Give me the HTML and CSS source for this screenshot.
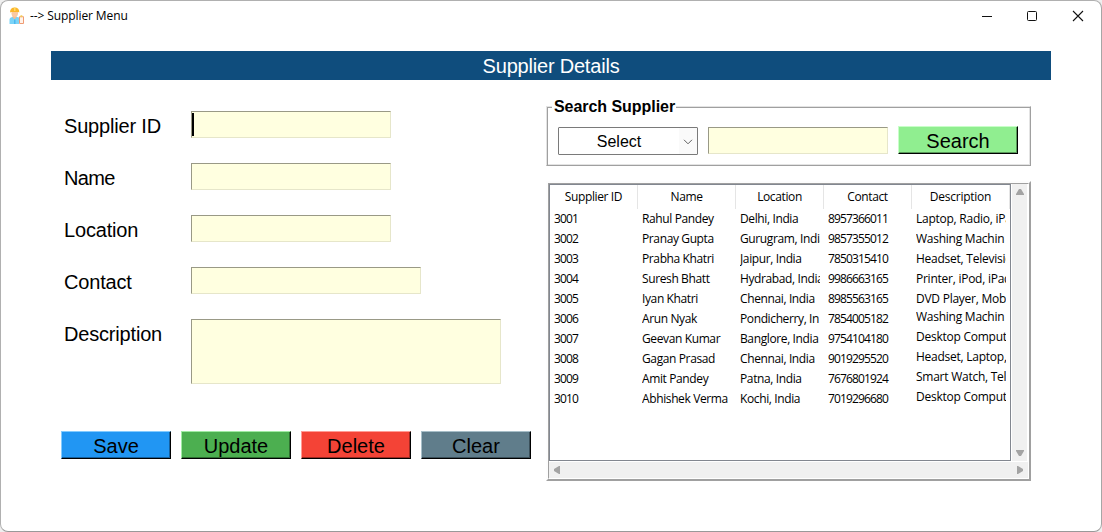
FILE: index.html
```html
<!DOCTYPE html>
<html lang="en">
<head>
<meta charset="utf-8">
<title>Supplier Menu</title>
<link rel="stylesheet" href="styles.css">
</head>
<body>
<div class="window">
  <header class="titlebar">
    <svg class="app-icon" width="16" height="18" viewBox="0 0 16 18">
      <path d="M0.5 17v-4.500q0-2 2-2.200l2-.5h3l2.500.7v6.500z" fill="#7bd3f7"/>
      <path d="M3.500 10l2 2.500 2-2.500v-2h-4z" fill="#f9b98f"/>
      <path d="M5 12.500h1.500v4.500h-1.500z" fill="#4cb8ee"/>
      <path d="M2.500 4.500h6.500v2.500q-.5 3-3.200 3t-3.300-3z" fill="#fbc9a2"/>
      <path d="M1 5.500q0-5 4.700-5t4.600 5l-1.300-.6h-6.600z" fill="#fbb72c"/>
      <path d="M5 .5h1.500v3.500h-1.500z" fill="#ffd968"/>
      <path d="M10.500 9.700h4v6.800h-4z" fill="#fff3ea" stroke="#ef9c75"/>
      <path d="M11.500 8.300h1.800v2h-1.800z" fill="#f5cb57"/>
    </svg>
    <span class="caption">--&gt; Supplier Menu</span>
    <svg class="controls" width="106" height="12" viewBox="0 0 106 12" fill="none" stroke="#111">
      <path d="M0 6.500h10"/>
      <rect x="45.500" y="1.500" width="9" height="9" rx="1"/>
      <path d="M91 1l10 10M101 1l-10 10" stroke-width="1.100"/>
    </svg>
  </header>
  <h1 class="banner">Supplier Details</h1>
  <main class="content">
    <section class="form">
      <div class="field"><label>Supplier ID</label><div class="entry focused"></div></div>
      <div class="field"><label class="tight">Name</label><div class="entry"></div></div>
      <div class="field"><label>Location</label><div class="entry"></div></div>
      <div class="field"><label>Contact</label><div class="entry wide"></div></div>
      <div class="field"><label>Description</label><div class="entry area"></div></div>
      <div class="actions">
        <button class="btn save">Save</button>
        <button class="btn update">Update</button>
        <button class="btn delete">Delete</button>
        <button class="btn clear">Clear</button>
      </div>
    </section>
    <section class="side">
      <div class="search">
        <span class="legend">Search Supplier</span>
        <div class="combo"><span class="value">Select</span><span class="drop"><svg width="10" height="6" viewBox="0 0 10 6" fill="none" stroke="#606060"><path d="M1 .8l4 4 4-4"/></svg></span></div>
        <div class="entry query"></div>
        <button class="btn find">Search</button>
      </div>
      <div class="panel">
        <div class="panel-inner">
          <div class="tree">
            <div class="row head"><span>Supplier ID</span><span>Name</span><span>Location</span><span>Contact</span><span>Description</span></div>
            <div class="row"><span class="num">3001</span><span>Rahul Pandey</span><span>Delhi, India</span><span class="num">8957366011</span><span>Laptop, Radio, iPad</span></div>
            <div class="row"><span class="num">3002</span><span>Pranay Gupta</span><span>Gurugram, India</span><span class="num">9857355012</span><span>Washing Machin</span></div>
            <div class="row"><span class="num">3003</span><span>Prabha Khatri</span><span>Jaipur, India</span><span class="num">7850315410</span><span>Headset, Television</span></div>
            <div class="row"><span class="num">3004</span><span>Suresh Bhatt</span><span>Hydrabad, India</span><span class="num">9986663165</span><span>Printer, iPod, iPad</span></div>
            <div class="row"><span class="num">3005</span><span>Iyan Khatri</span><span>Chennai, India</span><span class="num">8985563165</span><span>DVD Player, Mobi</span></div>
            <div class="row multi"><span class="num">3006</span><span>Arun Nyak</span><span>Pondicherry, In</span><span class="num">7854005182</span><span>Washing Machin</span></div>
            <div class="row multi"><span class="num">3007</span><span>Geevan Kumar</span><span>Banglore, India</span><span class="num">9754104180</span><span>Desktop Comput</span></div>
            <div class="row multi"><span class="num">3008</span><span>Gagan Prasad</span><span>Chennai, India</span><span class="num">9019295520</span><span>Headset, Laptop,</span></div>
            <div class="row multi"><span class="num">3009</span><span>Amit Pandey</span><span>Patna, India</span><span class="num">7676801924</span><span>Smart Watch, Tel</span></div>
            <div class="row multi"><span class="num">3010</span><span>Abhishek Verma</span><span>Kochi, India</span><span class="num">7019296680</span><span>Desktop Comput</span></div>
          </div>
          <div class="vbar">
            <svg width="8" height="6" viewBox="0 0 8 6"><path d="M0 6v-1l3-5h2l3 5v1z"/></svg>
            <svg width="8" height="6" viewBox="0 0 8 6"><path d="M0 0v1l3 5h2l3-5v-1z"/></svg>
          </div>
          <div class="hbar">
            <svg width="6" height="8" viewBox="0 0 6 8"><path d="M6 0h-1l-5 3v2l5 3h1z"/></svg>
            <svg width="6" height="8" viewBox="0 0 6 8"><path d="M0 0h1l5 3v2l-5 3h-1z"/></svg>
          </div>
        </div>
      </div>
    </section>
  </main>
</div>
</body>
</html>
```
FILE: styles.css
```css
* { box-sizing: border-box; }
body {
  margin: 0;
  background: #efefef;
  font-family: "Liberation Sans", Arial, sans-serif;
  color: #000;
}
.window {
  width: 1102px;
  height: 532px;
  border: 1px solid #b0b0b0;
  border-right-color: #a6a6a6;
  border-bottom-color: #999;
  border-radius: 8px;
  background: #fff;
  overflow: hidden;
}
.titlebar {
  display: flex;
  align-items: center;
  height: 29px;
  padding: 0 13px 0 8px;
}
.caption {
  margin-left: 5px;
  font: 12px/20px "Open Sans", sans-serif;
  letter-spacing: -0.1px;
}
.controls { margin-left: auto; }
.banner {
  width: 1000px;
  height: 29px;
  margin: 21px 0 0 50px;
  background: #0f4d7d;
  color: #fff;
  font-size: 20px;
  font-weight: 400;
  line-height: 31px;
  letter-spacing: -0.2px;
  text-align: center;
}
.content { display: flex; }
.form {
  flex: none;
  width: 545px;
  padding: 31px 0 0 60px;
}
.field {
  display: flex;
  margin-bottom: 25px;
}
.field label {
  width: 130px;
  height: 27px;
  padding-left: 3px;
  font-size: 20px;
  line-height: 31px;
  letter-spacing: -0.18px;
}
.field .tight { letter-spacing: -0.7px; }
.entry {
  width: 200px;
  height: 27px;
  border: 1px solid;
  border-color: #999986 #e6e6ca #e6e6ca #999986;
  background: #ffffe0;
}
.entry.wide { width: 230px; }
.entry.area { width: 310px; height: 65px; }
.entry.query { width: 180px; }
.entry.focused { padding-top: 1px; }
.entry.focused::before {
  content: "";
  display: block;
  width: 2px;
  height: 23px;
  background: #000;
}
.actions {
  display: flex;
  gap: 10px;
  margin-top: 47px;
}
.btn {
  width: 110px;
  height: 28px;
  padding: 0;
  border: 1px solid;
  border-color: var(--light) #000 #000 var(--light);
  background: var(--face);
  box-shadow: inset -1px -1px 0 var(--dark);
  color: #000;
  font: 20px/28px "Liberation Sans", Arial, sans-serif;
}
.save { --face: #2196f3; --light: #83cbff; --dark: #14609e; }
.update { --face: #4caf50; --light: #a0eba3; --dark: #2e6e31; }
.delete { --face: #f44336; --light: #ff9c95; --dark: #9c2a22; }
.clear { --face: #607d8b; --light: #a7bec8; --dark: #3b4f59; }
.find { --face: #90ee90; --light: #c8ffc8; --dark: #5a985a; width: 120px; }
.side { padding-top: 26px; }
.search {
  position: relative;
  display: flex;
  gap: 10px;
  width: 485px;
  height: 60px;
  padding: 20px 0 0 11px;
  border: 1px solid;
  border-color: #e3e3e3 #a0a0a0 #a0a0a0 #e3e3e3;
  box-shadow: inset 1px 1px 0 #a0a0a0, inset -1px -1px 0 #e3e3e3;
}
.legend {
  position: absolute;
  left: 5px;
  top: -10px;
  padding: 0 1px 0 2px;
  background: #fff;
  font-size: 16px;
  font-weight: 700;
  line-height: 20px;
  letter-spacing: -0.05px;
}
.combo {
  display: flex;
  width: 140px;
  height: 28px;
  border: 1px solid #7a7a7a;
  border-radius: 1px;
}
.value {
  flex: 1;
  font-size: 16px;
  line-height: 28px;
  text-align: center;
}
.drop {
  display: flex;
  align-items: center;
  justify-content: center;
  width: 18px;
  padding-top: 2px;
  background: #fafafa;
}
.find { margin-top: -1px; }
.panel {
  width: 485px;
  height: 300px;
  margin-top: 15px;
  border: 2px solid;
  border-color: #fdfdfd #a0a0a0 #a0a0a0 #fdfdfd;
}
.panel-inner {
  display: grid;
  grid-template: 277px 17px / 462px 17px;
  width: 481px;
  height: 296px;
  border: 1px solid;
  border-color: #a0a0a0 #fff #fff #a0a0a0;
}
.tree {
  border: 1px solid #828790;
  font: 12px/20px "Open Sans", sans-serif;
  letter-spacing: -0.38px;
}
.row {
  display: grid;
  grid-template-columns: 88px 98px 88px 88px 98px;
  height: 20px;
}
.row span {
  margin: 0 4px;
  overflow: hidden;
  white-space: nowrap;
}
.row .num { letter-spacing: -0.87px; }
.row span:last-child { letter-spacing: -0.25px; }
.head { height: 24px; line-height: 24px; }
.head span {
  margin: 0;
  border-right: 1px solid #e5e5e5;
  text-align: center;
}
.multi span:last-child { line-height: 16px; }
.vbar, .hbar {
  display: flex;
  justify-content: space-between;
  align-items: center;
  background: #f0f0f0;
  fill: #a3a3a3;
}
.vbar {
  flex-direction: column;
  margin: 0 1px;
  padding: 5px 0;
}
.hbar {
  grid-column: span 2;
  margin-top: 1px;
  padding: 0 5px;
}
```
